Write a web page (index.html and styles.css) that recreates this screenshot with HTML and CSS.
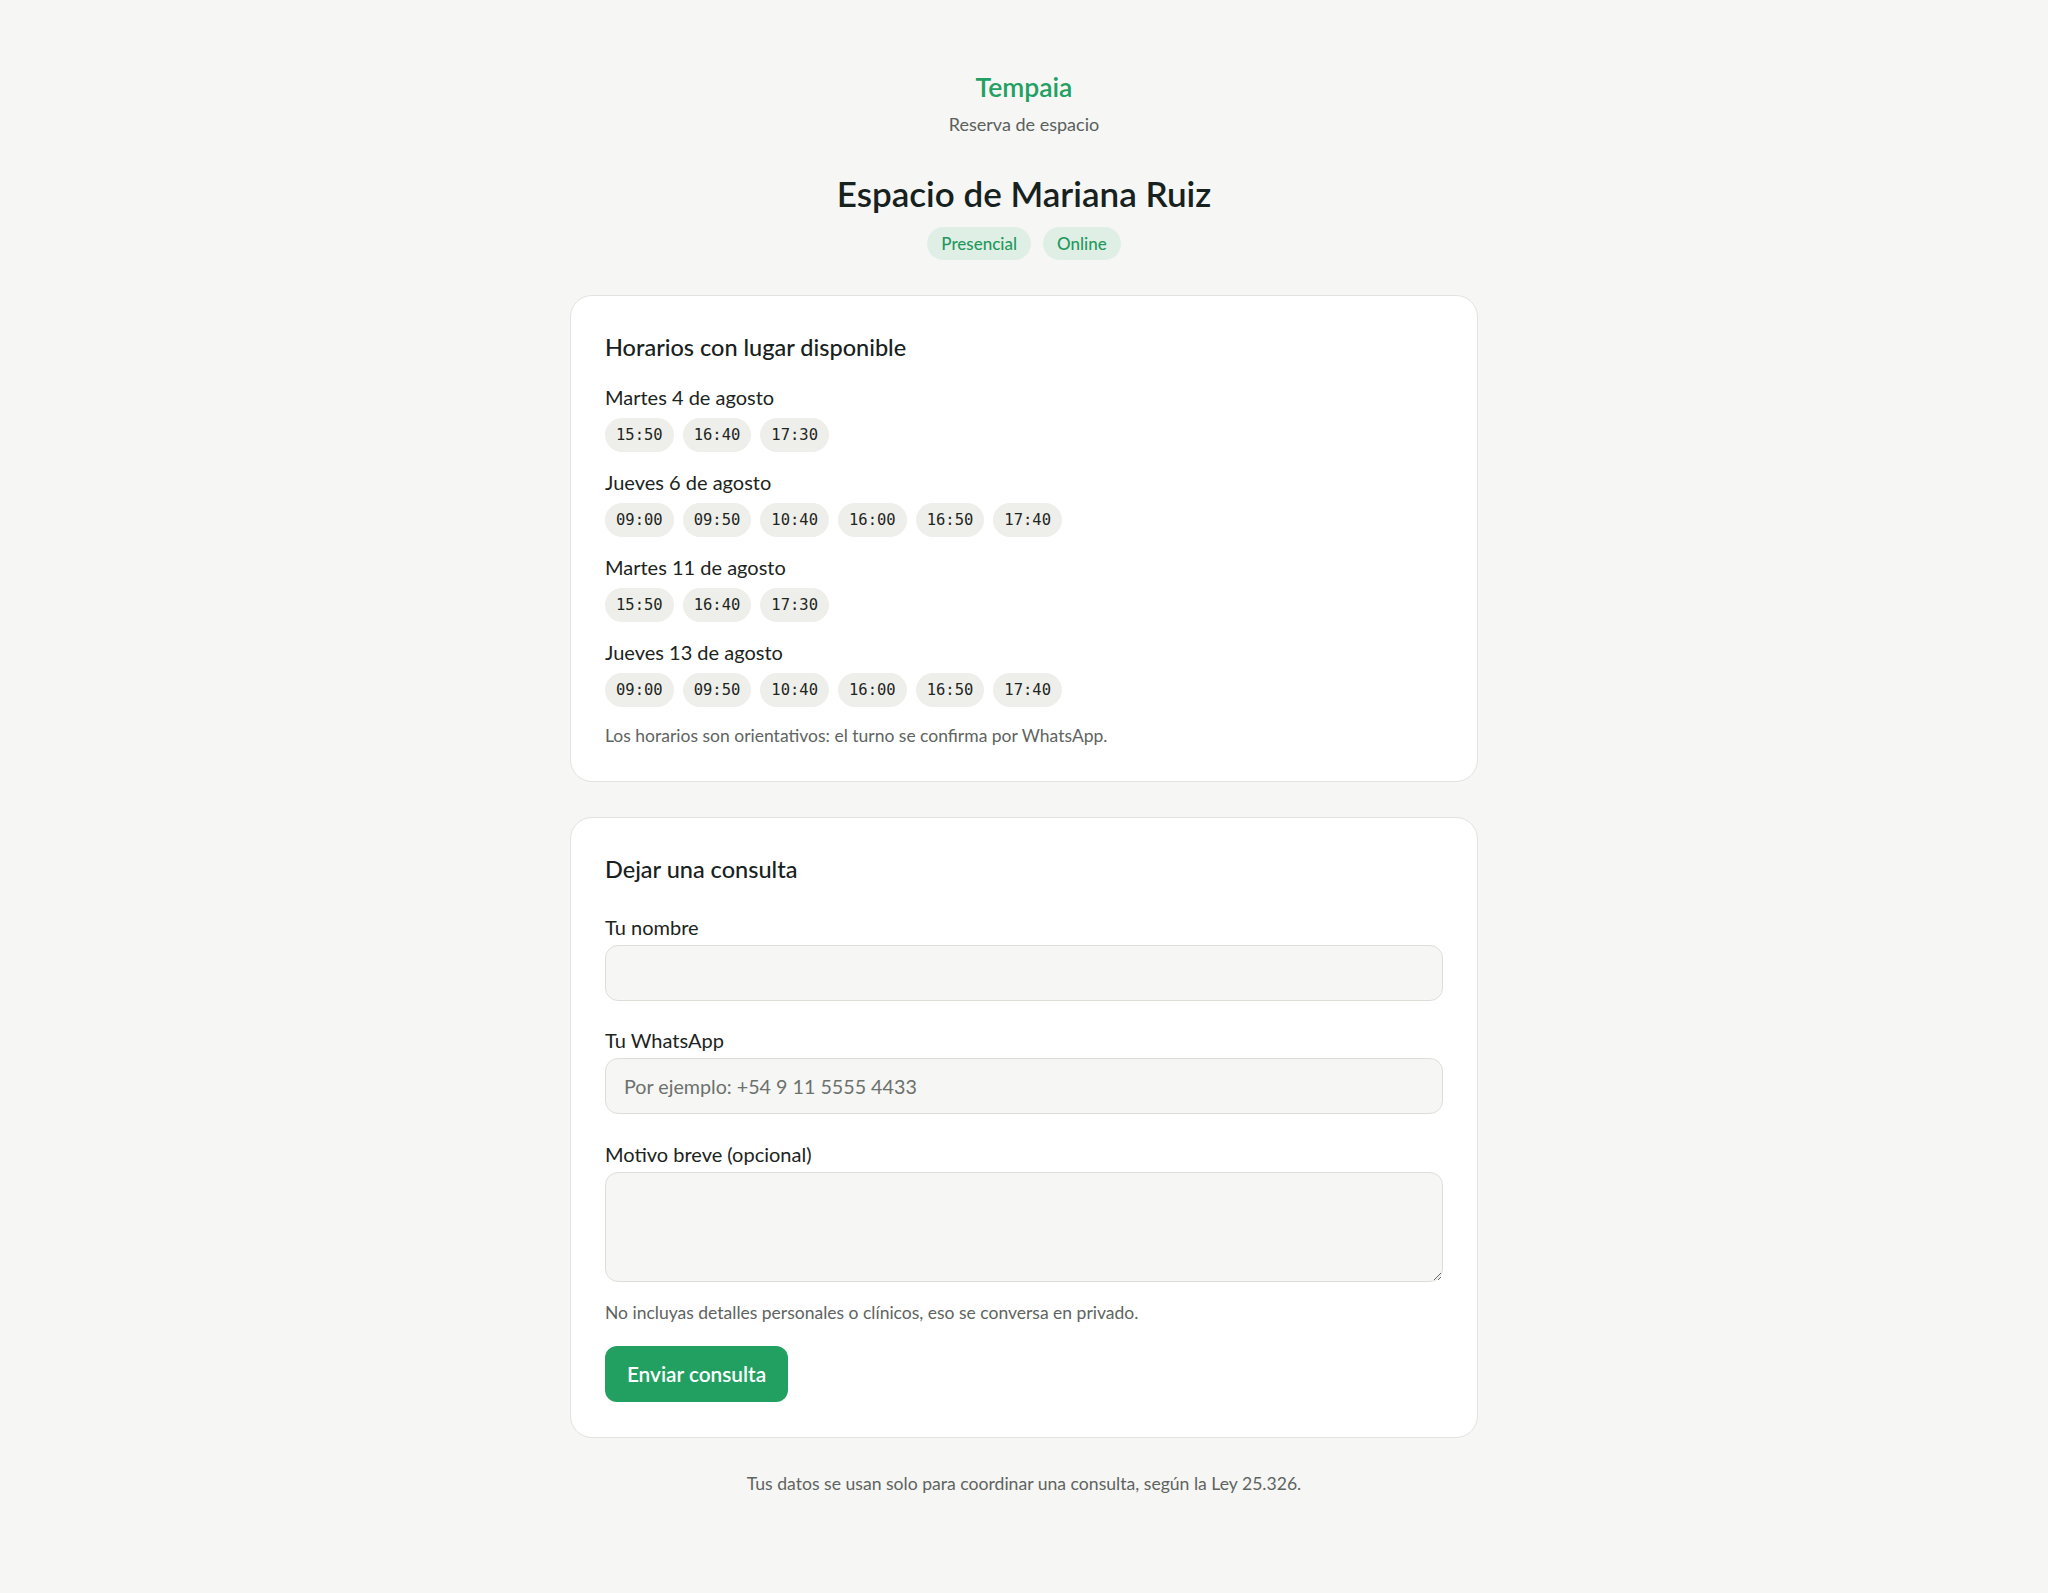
FILE: index.html
```html
<!DOCTYPE html>
<html lang="es">
<head>
<meta charset="utf-8">
<title>Tempaia - Espacio de Mariana Ruiz</title>
<link rel="stylesheet" href="styles.css">
</head>
<body>
<main class="page">
  <header class="top">
    <div class="brand">Tempaia</div>
    <div class="tagline">Reserva de espacio</div>
    <h1 class="title">Espacio de Mariana Ruiz</h1>
    <div class="badges">
      <span class="badge">Presencial</span>
      <span class="badge">Online</span>
    </div>
  </header>

  <section class="card">
    <h2 class="card-title">Horarios con lugar disponible</h2>
    <div class="days">
      <div class="day">
        <div class="day-label">Martes 4 de agosto</div>
        <div class="chips"><span class="chip">15:50</span><span class="chip">16:40</span><span class="chip">17:30</span></div>
      </div>
      <div class="day">
        <div class="day-label">Jueves 6 de agosto</div>
        <div class="chips"><span class="chip">09:00</span><span class="chip">09:50</span><span class="chip">10:40</span><span class="chip">16:00</span><span class="chip">16:50</span><span class="chip">17:40</span></div>
      </div>
      <div class="day">
        <div class="day-label">Martes 11 de agosto</div>
        <div class="chips"><span class="chip">15:50</span><span class="chip">16:40</span><span class="chip">17:30</span></div>
      </div>
      <div class="day">
        <div class="day-label">Jueves 13 de agosto</div>
        <div class="chips"><span class="chip">09:00</span><span class="chip">09:50</span><span class="chip">10:40</span><span class="chip">16:00</span><span class="chip">16:50</span><span class="chip">17:40</span></div>
      </div>
    </div>
    <p class="note">Los horarios son orientativos: el turno se confirma por WhatsApp.</p>
  </section>

  <section class="card card-form">
    <h2 class="card-title form-title">Dejar una consulta</h2>
    <form class="form">
      <div class="field">
        <label class="label" for="nombre">Tu nombre</label>
        <input class="input" id="nombre" type="text">
      </div>
      <div class="field">
        <label class="label" for="wa">Tu WhatsApp</label>
        <input class="input" id="wa" type="text" placeholder="Por ejemplo: +54 9 11 5555 4433">
      </div>
      <div class="field field-last">
        <label class="label" for="motivo">Motivo breve (opcional)</label>
        <textarea class="input textarea" id="motivo"></textarea>
      </div>
      <p class="note form-note">No incluyas detalles personales o clínicos, eso se conversa en privado.</p>
      <button class="button" type="button">Enviar consulta</button>
    </form>
  </section>

  <p class="footer">Tus datos se usan solo para coordinar una consulta, según la Ley 25.326.</p>
</main>
</body>
</html>
```

FILE: styles.css
```css
* { box-sizing: border-box; }

html, body {
  margin: 0;
  padding: 0;
  background: #f6f6f4;
  color: #1b2420;
  font-family: "Lato", "Noto Sans", sans-serif;
}

.page {
  width: 908px;
  margin: 0 auto;
  padding: 70px 0 60px;
}

.top {
  display: flex;
  flex-direction: column;
  align-items: center;
  text-align: center;
}

.brand {
  font-size: 26.5px;
  line-height: 34px;
  font-weight: 600;
  color: #22a062;
}

.tagline {
  margin-top: 8px;
  font-size: 18px;
  line-height: 24px;
  color: #5a605d;
}

.title {
  margin: 35px 0 0;
  font-size: 35px;
  line-height: 44px;
  font-weight: 600;
  color: #17211d;
}

.badges {
  margin-top: 12px;
  display: flex;
  gap: 12px;
}

.badge {
  height: 33px;
  padding: 0 14px;
  border-radius: 17px;
  background: #e0efe5;
  color: #23995d;
  font-size: 17px;
  font-weight: 500;
  line-height: 33px;
}

.card {
  margin-top: 35px;
  background: #ffffff;
  border: 1px solid #e2e2de;
  border-radius: 22px;
  padding: 36px 34px 33px 34px;
}

.card-form {
  margin-top: 34.5px;
  padding-bottom: 35px;
}

.card-title {
  margin: 0 0 21px;
  font-size: 23.5px;
  line-height: 30px;
  font-weight: 500;
  color: #17211d;
}

.days {
  display: flex;
  flex-direction: column;
  gap: 16px;
}

.day-label {
  font-size: 20px;
  line-height: 28px;
  color: #1b2420;
}

.chips {
  margin-top: 7px;
  display: flex;
  gap: 9px;
}

.chip {
  height: 34px;
  padding: 0 11px;
  border-radius: 17px;
  background: #eeefeb;
  font-family: "DejaVu Sans Mono", monospace;
  font-size: 15.5px;
  line-height: 34px;
  color: #1e2622;
}

.note {
  margin: 17px 0 0;
  font-size: 17.5px;
  line-height: 24px;
  color: #5e6461;
}

.form-title { margin-bottom: 30px; }

.form {
  display: flex;
  flex-direction: column;
}

.field {
  display: flex;
  flex-direction: column;
  margin-bottom: 26.5px;
}

.field-last { margin-bottom: 0; }

.label {
  font-size: 20px;
  line-height: 26px;
  margin-bottom: 5px;
  color: #1b2420;
}

.input {
  width: 100%;
  height: 56px;
  padding: 0 18px;
  border: 1px solid #deded9;
  border-radius: 13px;
  background: #f6f6f4;
  font-family: "Lato", "Noto Sans", sans-serif;
  font-size: 19.7px;
  color: #1b2420;
  outline: none;
}

.input::placeholder { color: #6c716e; }

.textarea {
  height: 110px;
  padding: 14px 18px;
  resize: vertical;
  display: block;
}

.form-note { margin-top: 19px; }

.button {
  align-self: flex-start;
  margin-top: 21px;
  height: 56px;
  width: 183px;
  border: none;
  border-radius: 12px;
  background: #21a061;
  color: #ffffff;
  font-family: "Lato", "Noto Sans", sans-serif;
  font-size: 20.8px;
  font-weight: 600;
}

.footer {
  margin: 34px 0 0;
  text-align: center;
  font-size: 17.6px;
  line-height: 24px;
  color: #5e6461;
}
```
